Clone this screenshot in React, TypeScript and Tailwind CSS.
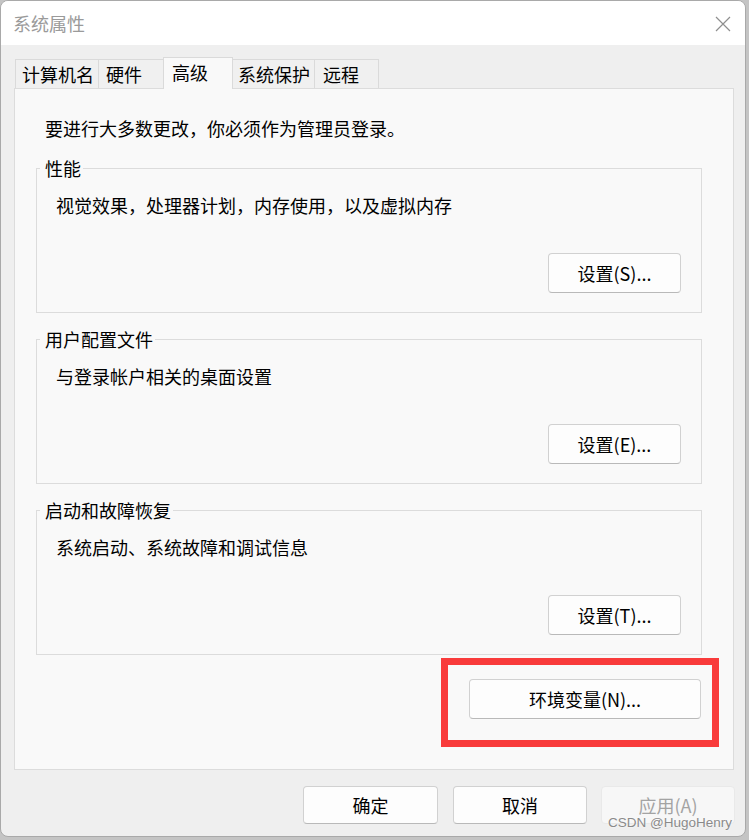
import React from "react";

function Btn({ children, className = "" }: { children: React.ReactNode; className?: string }) {
  return (
    <button
      className={`flex items-center justify-center rounded-[4px] border border-[#d1d1d1] border-b-[#b9b9b9] bg-[#fdfdfd] text-[18px] leading-[24px] text-black ${className}`}
    >
      {children}
    </button>
  );
}

function GroupBox({ label, desc, btn, className = "" }: { label: string; desc: string; btn: string; className?: string }) {
  return (
    <div className={`relative flex flex-col border border-[#dcdcdc] pt-[24px] pb-[19px] pl-[19px] pr-[20px] ${className}`}>
      <span className="absolute -top-[13px] left-[3px] bg-[#f9f9f9] pl-[5px] pr-[2px] text-[18px] leading-[24px] text-black">
        {label}
      </span>
      <p className="text-[18px] leading-[24px] text-black">{desc}</p>
      <Btn className="mt-[36px] h-[40px] w-[133px] self-end">{btn}</Btn>
    </div>
  );
}

const tabs = [
  { t: "计算机名", w: "w-[84px]", pl: "pl-[6px]" },
  { t: "硬件", w: "w-[66px]", pl: "pl-[7px]" },
  { t: "高级", w: "w-[70px]", pl: "pl-[8px]", sel: true },
  { t: "系统保护", w: "w-[83px]", pl: "pl-[5px]" },
  { t: "远程", w: "w-[65px]", pl: "pl-[8px]" },
];

export default function App() {
  return (
    <div className="relative h-[840px] w-[749px] overflow-hidden bg-[#c4c4c4] font-['Microsoft_YaHei_UI','Noto_Sans_CJK_SC',sans-serif]">
      <div className="flex h-[837px] w-[746px] flex-col overflow-hidden rounded-[8px] border border-[#a9a9a9] bg-[#efefef]">
        {/* title bar */}
        <div className="flex h-[44px] shrink-0 items-center justify-between bg-white pl-[12px] pr-[14px]">
          <span className="text-[18px] leading-[24px] text-[#9a9a9a]">系统属性</span>
          <svg width="16" height="16" viewBox="0 0 16 16" className="mt-[1px]">
            <path d="M1 1 L15 15 M15 1 L1 15" stroke="#8f8f8f" strokeWidth="1.2" fill="none" />
          </svg>
        </div>

        {/* tabs */}
        <div className="relative z-10 -mb-[1px] ml-[14px] mt-[12px] flex h-[32px] items-end">
          {tabs.map((tab, i) => (
            <div
              key={tab.t}
              className={`${tab.w} ${tab.pl} ${i > 0 ? "-ml-[1px]" : ""} flex items-center border-l border-r border-t border-[#dadada] text-[18px] leading-[24px] text-black ${
                tab.sel ? "relative z-10 h-[32px] bg-[#f9f9f9] pb-[3px]" : "mb-[1px] h-[29px] bg-[#f0f0f0]"
              }`}
            >
              {tab.t}
            </div>
          ))}
        </div>

        {/* panel */}
        <div className="ml-[13px] flex h-[682px] w-[720px] flex-col border border-[#dcdcdc] bg-[#f9f9f9] pl-[21px] pr-[31px] pt-[27px]">
          <p className="ml-[9px] text-[18px] leading-[24px] text-black">要进行大多数更改，你必须作为管理员登录。</p>
          <GroupBox className="mt-[28px]" label="性能" desc="视觉效果，处理器计划，内存使用，以及虚拟内存" btn="设置(S)..." />
          <GroupBox className="mt-[26px]" label="用户配置文件" desc="与登录帐户相关的桌面设置" btn="设置(E)..." />
          <GroupBox className="mt-[26px]" label="启动和故障恢复" desc="系统启动、系统故障和调试信息" btn="设置(T)..." />
          <Btn className="mr-[1px] mt-[24px] h-[40px] w-[232px] self-end">环境变量(N)...</Btn>
        </div>

        {/* bottom buttons */}
        <div className="mt-[16px] flex justify-end gap-[14px] pr-[10px]">
          <Btn className="mr-[1px] h-[38px] w-[135px]">确定</Btn>
          <Btn className="h-[38px] w-[134px]">取消</Btn>
          <button className="flex h-[38px] w-[134px] items-center justify-center rounded-[4px] border border-[#e9e9e9] bg-[#f7f7f7] text-[18px] leading-[24px] text-[#a3a3a3]">
            应用(A)
          </button>
        </div>
      </div>

      {/* red annotation box */}
      <div className="absolute left-[441px] top-[658px] h-[89px] w-[278px] border-[7px] border-[#f93b3b]" />

      {/* watermark */}
      <span className="absolute left-[608px] top-[815px] font-['Liberation_Sans',sans-serif] text-[13.5px] leading-[16px] text-[#8a8a8a] [text-shadow:0_0_2px_#ffffff]">
        CSDN @HugoHenry
      </span>
    </div>
  );
}
